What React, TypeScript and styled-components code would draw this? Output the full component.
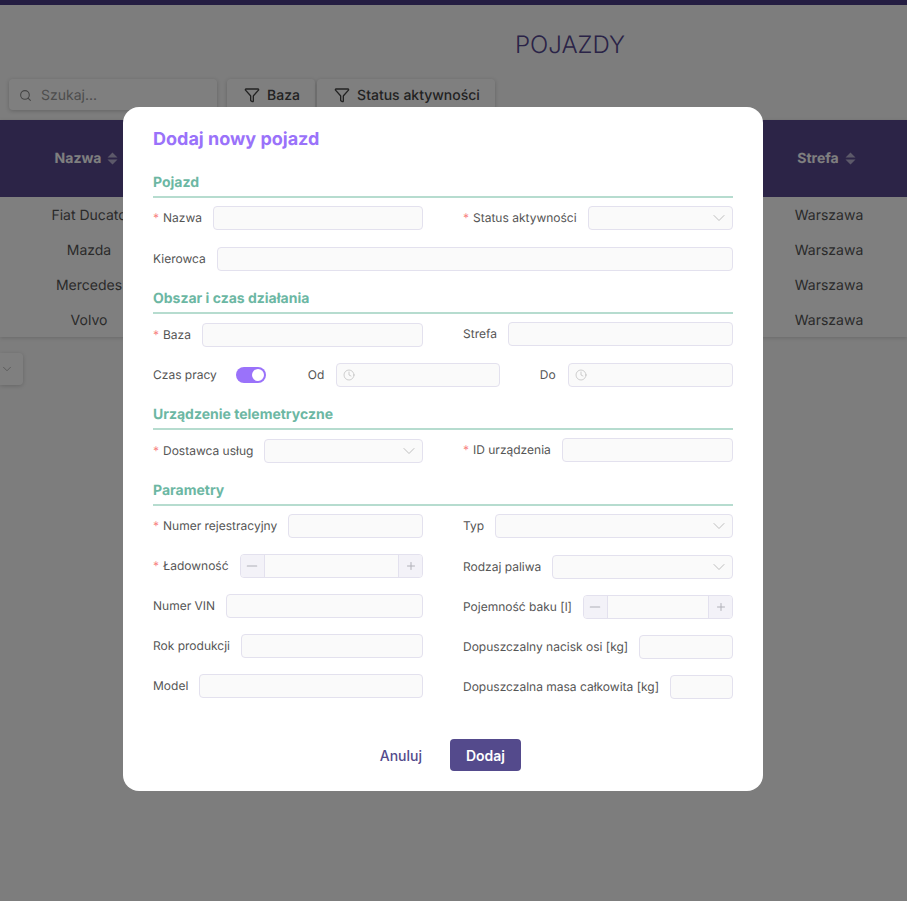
import React from 'react';
import styled, { createGlobalStyle } from 'styled-components';
import { ChevronDown, Clock, Funnel, Minus, Plus, Search } from 'lucide-react';

const GlobalStyle = createGlobalStyle`
  html, body {
    margin: 0;
    height: 100%;
    overflow: hidden;
    background: #fafafa;
    font-family: Inter, "Noto Sans", sans-serif;
    color: #4a4a4a;
    text-rendering: geometricPrecision;
  }
  * { box-sizing: border-box; }
`;

const Page = styled.div`
  height: 901px;
  border-top: 5px solid #483a85;
`;

const PageTitle = styled.h1`
  margin: 0;
  height: 74px;
  padding: 26px 0 0 233px;
  font-size: 24px;
  line-height: 28px;
  font-weight: 300;
  text-align: center;
  color: #54468f;
`;

const Toolbar = styled.div`
  display: flex;
  height: 41px;
  padding-left: 9px;
`;

const SearchBox = styled.div`
  display: flex;
  align-items: center;
  gap: 9px;
  width: 208px;
  height: 31px;
  margin-right: 10px;
  padding: 1px 0 0 10px;
  border-radius: 4px;
  background: #fff;
  box-shadow: 0 1px 4px rgba(0, 0, 0, 0.2);
  font-size: 14px;
  color: #9a9a9a;
  svg { color: #8a8a8a; }
`;

const FilterButton = styled.div<{ $width: number }>`
  display: flex;
  align-items: center;
  justify-content: center;
  gap: 7px;
  width: ${p => p.$width}px;
  height: 31px;
  margin-right: 2px;
  padding: 1px 0 0 2px;
  border-radius: 4px;
  background: #fff;
  box-shadow: 0 1px 4px rgba(0, 0, 0, 0.2);
  font-size: 14px;
  font-weight: 500;
  color: #444;
`;

const Table = styled.div`
  box-shadow: 0 1px 4px rgba(0, 0, 0, 0.16);
  font-size: 14px;
  background: #fff;
`;

const HeaderRow = styled.div`
  display: grid;
  grid-template-columns: 173px 1fr 161px;
  align-items: center;
  height: 77px;
  padding-bottom: 1px;
  background: #58488f;
`;

const HeaderCell = styled.div`
  display: flex;
  align-items: center;
  justify-content: center;
  gap: 6px;
  color: #fff;
  font-weight: 700;
`;

const Row = styled.div`
  display: grid;
  grid-template-columns: 178px 1fr 156px;
  align-items: center;
  height: 35px;
  padding-top: 2px;
  text-align: center;
  color: #555;
`;

const PageSize = styled.div`
  display: flex;
  align-items: center;
  width: 23px;
  height: 32px;
  margin-top: 16px;
  border-radius: 0 4px 4px 0;
  background: #fff;
  box-shadow: 0 1px 4px rgba(0, 0, 0, 0.18);
  color: #999;
`;

const Overlay = styled.div`
  position: fixed;
  inset: 0;
  padding: 107px 0 0 123px;
  background: rgba(0, 0, 0, 0.5);
`;

const Modal = styled.div`
  width: 640px;
  height: 684px;
  padding: 21px 30px 20px;
  border-radius: 16px;
  background: #fff;
`;

const ModalTitle = styled.h2`
  margin: 0 0 23px;
  height: 22px;
  font-size: 18px;
  line-height: 24px;
  font-weight: 700;
  color: #9a72fa;
`;

const Section = styled.section`
  margin-bottom: 18px;
`;

const SectionTitle = styled.h3`
  margin: 0 0 8px;
  height: 25px;
  border-bottom: 2px solid #b6dccf;
  font-size: 14px;
  line-height: 20px;
  font-weight: 700;
  color: #6cb7a3;
`;

const Columns = styled.div`
  display: grid;
  grid-template-columns: 270px 270px;
  column-gap: 40px;
`;

const Stack = styled.div<{ $top?: number }>`
  display: flex;
  flex-direction: column;
  gap: 16px;
  margin-top: ${p => p.$top ?? 0}px;
`;

const FieldRow = styled.div<{ $tall?: boolean; $low?: boolean }>`
  display: flex;
  align-items: center;
  gap: 11px;
  height: 24px;
  min-width: 0;
  ${p => p.$tall && 'margin-bottom: 1px;'}
  ${p => p.$low && 'margin-top: 1px;'}
`;

const Label = styled.label`
  flex: none;
  font-size: 12px;
  line-height: 16px;
  white-space: nowrap;
  color: #555;
`;

const Star = styled.span`
  margin-right: 4px;
  color: #f77f7f;
`;

const Control = styled.div`
  display: flex;
  align-items: center;
  flex: 1;
  min-width: 0;
  height: 24px;
  padding: 0 6px;
  border: 1px solid #e3e1ee;
  border-radius: 4px;
  background: #fafafa;
  color: #b0b0b0;
`;

const SelectControl = styled(Control)`
  justify-content: flex-end;
  padding: 0 3px 0 0;
  color: #b8b8b8;
  svg { flex: none; }
`;

const Stepper = styled(Control)`
  padding: 0;
  overflow: hidden;
`;

const StepButton = styled.div<{ $side: 'left' | 'right' }>`
  display: flex;
  align-items: center;
  justify-content: center;
  flex: none;
  width: 24px;
  height: 100%;
  background: #f3f2f8;
  color: #b0b0b8;
  border-${p => (p.$side === 'left' ? 'right' : 'left')}: 1px solid #e3e1ee;
`;

const StepValue = styled.div`
  flex: 1;
`;

const TimeRow = styled.div`
  display: flex;
  align-items: center;
  height: 24px;
  margin-top: 16px;
`;

const Toggle = styled.div`
  position: relative;
  flex: none;
  width: 30px;
  height: 16px;
  margin: 0 42px 0 19px;
  border-radius: 8px;
  background: #9a72fa;
  &::after {
    content: '';
    position: absolute;
    top: 2px;
    right: 2px;
    width: 12px;
    height: 12px;
    border-radius: 50%;
    background: #fff;
  }
`;

const TimeField = styled.div<{ $width: number; $left?: number }>`
  display: flex;
  align-items: center;
  gap: 12px;
  flex: none;
  width: ${p => p.$width}px;
  margin-left: ${p => p.$left ?? 0}px;
`;

const Footer = styled.div`
  display: flex;
  justify-content: flex-end;
  align-items: center;
  margin: 40px 212px 0 0;
`;

const CancelButton = styled.button`
  margin-right: 28px;
  padding: 0;
  border: 0;
  background: none;
  font: 500 14px Inter, sans-serif;
  color: #544a8c;
`;

const SubmitButton = styled.button`
  width: 71px;
  height: 32px;
  padding: 0;
  border: 0;
  border-radius: 4px;
  background: #544a8c;
  font: 600 14px Inter, sans-serif;
  color: #fff;
`;

const SortIcon = () => (
  <svg width="11" height="13" viewBox="0 0 11 13">
    <path d="M5.5 0.5 L10.5 5.5 H0.5 Z M0.5 7.5 H10.5 L5.5 12.5 Z" fill="#b9b3d3" />
  </svg>
);

const Select = () => (
  <SelectControl>
    <ChevronDown size={20} strokeWidth={1.1} />
  </SelectControl>
);

const Time = () => (
  <Control>
    <Clock size={12} strokeWidth={1.2} />
  </Control>
);

const NumberStepper = () => (
  <Stepper>
    <StepButton $side="left"><Minus size={16} strokeWidth={1.8} /></StepButton>
    <StepValue />
    <StepButton $side="right"><Plus size={12} strokeWidth={2} /></StepButton>
  </Stepper>
);

const Field = ({
  label,
  required,
  children,
  ...rest
}: {
  label: string;
  required?: boolean;
  children?: React.ReactNode;
  $tall?: boolean;
  $low?: boolean;
}) => (
  <FieldRow {...rest}>
    <Label>
      {required && <Star>*</Star>}
      {label}
    </Label>
    {children ?? <Control />}
  </FieldRow>
);

const vehicles = ['Fiat Ducato', 'Mazda', 'Mercedes', 'Volvo'];

export default function App() {
  return (
    <>
      <GlobalStyle />
      <Page>
        <PageTitle>POJAZDY</PageTitle>
        <Toolbar>
          <SearchBox>
            <Search size={13} strokeWidth={2} />
            Szukaj...
          </SearchBox>
          <FilterButton $width={88}>
            <Funnel size={16} strokeWidth={2} />
            Baza
          </FilterButton>
          <FilterButton $width={178}>
            <Funnel size={16} strokeWidth={2} />
            Status aktywności
          </FilterButton>
        </Toolbar>
        <Table>
          <HeaderRow>
            <HeaderCell>Nazwa <SortIcon /></HeaderCell>
            <div />
            <HeaderCell>Strefa <SortIcon /></HeaderCell>
          </HeaderRow>
          {vehicles.map(name => (
            <Row key={name}>
              <div>{name}</div>
              <div />
              <div>Warszawa</div>
            </Row>
          ))}
        </Table>
        <PageSize>
          <ChevronDown size={14} strokeWidth={1.2} />
        </PageSize>
      </Page>

      <Overlay>
        <Modal>
          <ModalTitle>Dodaj nowy pojazd</ModalTitle>

          <Section>
            <SectionTitle>Pojazd</SectionTitle>
            <Columns>
              <Field label="Nazwa" required $tall />
              <Field label="Status aktywności" required $tall><Select /></Field>
            </Columns>
            <Stack $top={16}>
              <Field label="Kierowca" />
            </Stack>
          </Section>

          <Section>
            <SectionTitle>Obszar i czas działania</SectionTitle>
            <Columns>
              <Field label="Baza" required $low />
              <Field label="Strefa" />
            </Columns>
            <TimeRow>
              <Label>Czas pracy</Label>
              <Toggle />
              <TimeField $width={192}>
                <Label>Od</Label>
                <Time />
              </TimeField>
              <TimeField $width={193} $left={40}>
                <Label>Do</Label>
                <Time />
              </TimeField>
            </TimeRow>
          </Section>

          <Section>
            <SectionTitle>Urządzenie telemetryczne</SectionTitle>
            <Columns>
              <Field label="Dostawca usług" required $low><Select /></Field>
              <Field label="ID urządzenia" required />
            </Columns>
          </Section>

          <section>
            <SectionTitle>Parametry</SectionTitle>
            <Columns>
              <Stack>
                <Field label="Numer rejestracyjny" required />
                <Field label="Ładowność" required><NumberStepper /></Field>
                <Field label="Numer VIN" />
                <Field label="Rok produkcji" />
                <Field label="Model" />
              </Stack>
              <Stack>
                <Field label="Typ" $tall><Select /></Field>
                <Field label="Rodzaj paliwa"><Select /></Field>
                <Field label="Pojemność baku [l]"><NumberStepper /></Field>
                <Field label="Dopuszczalny nacisk osi [kg]" />
                <Field label="Dopuszczalna masa całkowita [kg]" />
              </Stack>
            </Columns>
          </section>

          <Footer>
            <CancelButton>Anuluj</CancelButton>
            <SubmitButton>Dodaj</SubmitButton>
          </Footer>
        </Modal>
      </Overlay>
    </>
  );
}
